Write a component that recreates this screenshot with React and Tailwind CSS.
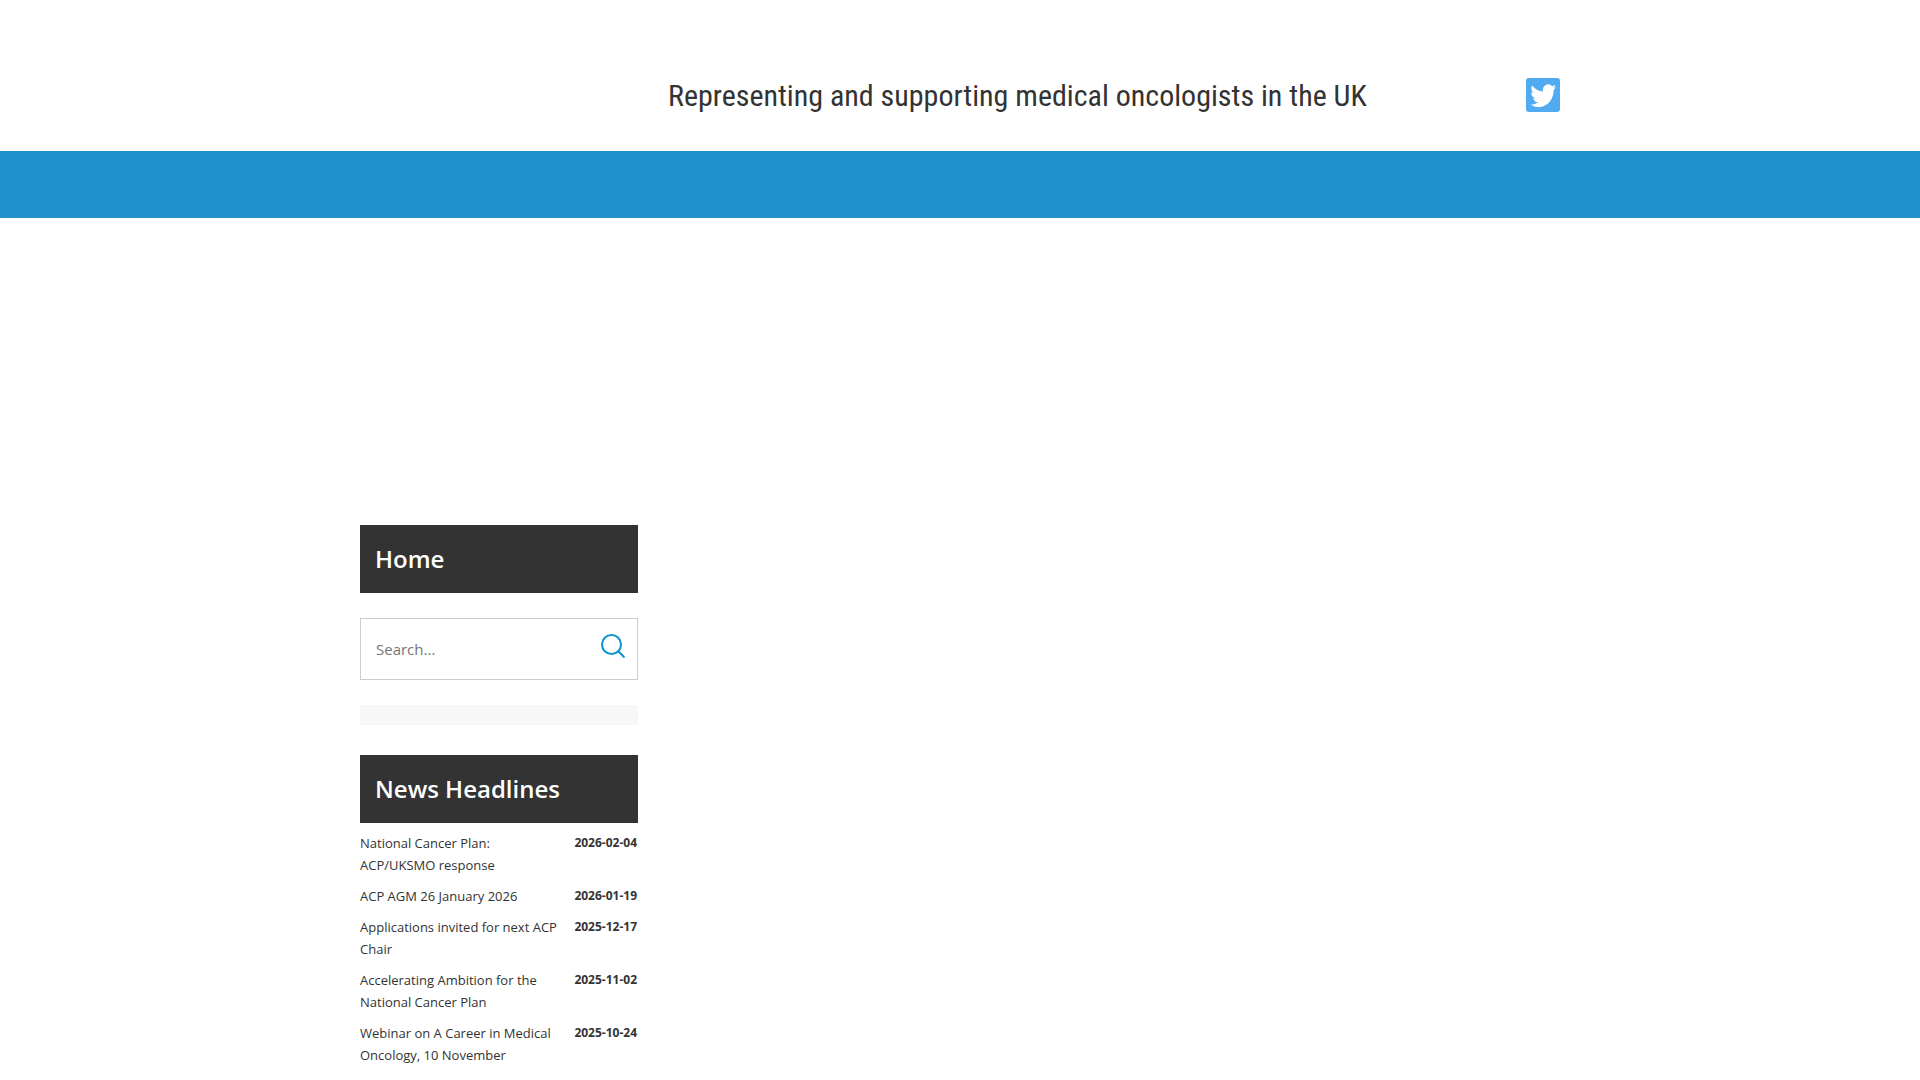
const headlines = [
  { title: "National Cancer Plan: ACP/UKSMO response", date: "2026-02-04" },
  { title: "ACP AGM 26 January 2026", date: "2026-01-19" },
  { title: "Applications invited for next ACP Chair", date: "2025-12-17" },
  { title: "Accelerating Ambition for the National Cancer Plan", date: "2025-11-02" },
  { title: "Webinar on A Career in Medical Oncology, 10 November", date: "2025-10-24" },
];

function TwitterLink() {
  return (
    <a href="#twitter" aria-label="Twitter" className="block size-[34px] rounded-[3px] bg-[#50abf1]">
      <svg viewBox="0 0 34 34" className="size-full" fill="#fff" aria-hidden="true">
        <g transform="translate(4.3 3.7) scale(1.08 1.17)">
          <path d="M23.953 4.57a10 10 0 01-2.825.775 4.958 4.958 0 002.163-2.723c-.951.555-2.005.959-3.127 1.184a4.92 4.92 0 00-8.384 4.482C7.69 8.095 4.067 6.13 1.64 3.162a4.822 4.822 0 00-.666 2.475c0 1.71.87 3.213 2.188 4.096a4.904 4.904 0 01-2.228-.616v.06a4.923 4.923 0 003.946 4.827 4.996 4.996 0 01-2.212.085 4.936 4.936 0 004.604 3.417 9.867 9.867 0 01-6.102 2.105c-.39 0-.779-.023-1.17-.067a13.995 13.995 0 007.557 2.209c9.053 0 13.998-7.496 13.998-13.985 0-.21 0-.42-.015-.63A9.935 9.935 0 0024 4.59z" />
        </g>
      </svg>
    </a>
  );
}

function PanelTitle({ children }) {
  return (
    <h2 className="bg-[#333] px-[15px] py-4 text-2xl leading-9 font-semibold text-white">{children}</h2>
  );
}

function SearchBox() {
  return (
    <form role="search" className="mt-[25px] flex border border-[#ccc] bg-white" onSubmit={(e) => e.preventDefault()}>
      <input
        type="text"
        aria-label="Search"
        placeholder="Search..."
        className="h-[60px] w-full min-w-0 flex-1 px-[15px] text-[15px] text-[#333] outline-none placeholder:text-[#757575]"
      />
      <button type="submit" aria-label="Search" className="mt-[15px] mr-3 size-6 shrink-0">
        <svg viewBox="0 0 24 24" className="size-6" fill="none" stroke="#0c94cf" strokeWidth="2" aria-hidden="true">
          <circle cx="10.5" cy="10.5" r="9.5" />
          <path d="M17.3 17.3 23.5 23.5" />
        </svg>
      </button>
    </form>
  );
}

export default function App() {
  return (
    <div className="min-h-screen bg-white font-['Open_Sans',sans-serif] text-[#333]">
      <header>
        <div className="mx-auto flex max-w-[1200px] items-center pt-[78px] pb-[39px]">
          <p className="ml-[308px] flex-1 font-['Roboto_Condensed','Roboto',sans-serif] text-3xl leading-9 whitespace-nowrap -mb-0.5">
            Representing and supporting medical oncologists in the UK
          </p>
          <TwitterLink />
        </div>
        <nav aria-label="Main" className="h-[67px] bg-[#1f91ca]" />
      </header>
      <main className="mx-auto max-w-[1200px] pt-[307px]">
        <aside className="w-[278px]">
          <PanelTitle>Home</PanelTitle>
          <SearchBox />
          <div className="mt-[25px] h-5 bg-[#f7f7f7]" />
          <section className="mt-[30px]">
            <PanelTitle>News Headlines</PanelTitle>
            <ul className="mt-[9px] space-y-[9px]">
              {headlines.map((item) => (
                <li key={item.date} className="flex items-start justify-between pr-px">
                  <a href="#news" className="w-[204px] text-[13px] leading-[22px]">{item.title}</a>
                  <time dateTime={item.date} className="text-xs leading-[22px] font-bold">{item.date}</time>
                </li>
              ))}
            </ul>
          </section>
        </aside>
      </main>
    </div>
  );
}
